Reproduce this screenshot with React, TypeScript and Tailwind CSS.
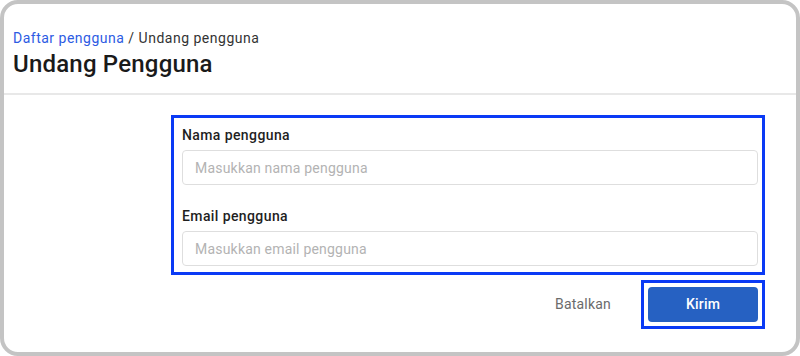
import React from "react";

export default function App() {
  return (
    <div
      className="w-[800px] h-[356px] bg-white"
      style={{ fontFamily: "Roboto, 'Noto Sans', sans-serif" }}
    >
      <div className="w-full h-full border-4 border-[#c4c4c4] rounded-[18px] flex flex-col bg-white overflow-hidden">
        <div className="pl-[9px] pt-[24px] h-[91px] border-b-2 border-[#e8e8e8]">
          <div className="text-[14px] leading-[20px] tracking-[0.5px] text-[#333333]">
            <span className="text-[#2d5be3]">Daftar pengguna</span> / Undang pengguna
          </div>
          <h1 className="mt-[2px] text-[24px] leading-[28px] tracking-[0.2px] font-medium text-[#1a1a1a]">
            Undang Pengguna
          </h1>
        </div>
        <div className="pl-[167px] pr-[31px] pt-[20px]">
          <div className="border-[3px] border-[#0a3af5] pl-[8px] pr-[4px] pt-[7px] pb-[6px]">
            <label className="block text-[14px] leading-[20px] tracking-[0.4px] font-medium text-[#1f1f1f]">
              Nama pengguna
            </label>
            <input
              className="mt-[5px] block w-full h-[35px] border border-[#dedede] rounded-[4px] px-[12px] text-[14px] tracking-[0.2px] placeholder:text-[#b3b3b3] outline-none"
              placeholder="Masukkan nama pengguna"
            />
            <label className="block mt-[21px] text-[14px] leading-[20px] tracking-[0.4px] font-medium text-[#1f1f1f]">
              Email pengguna
            </label>
            <input
              className="mt-[5px] block w-full h-[35px] border border-[#dedede] rounded-[4px] px-[12px] text-[14px] tracking-[0.2px] placeholder:text-[#b3b3b3] outline-none"
              placeholder="Masukkan email pengguna"
            />
          </div>
          <div className="mt-[5px] flex justify-end items-center gap-[30px]">
            <button className="text-[14px] tracking-[0.2px] text-[#6b6b6b]">Batalkan</button>
            <div className="border-[3px] border-[#0a3af5] p-[4px]">
              <button className="w-[110px] h-[35px] rounded-[4px] bg-[#2661c2] text-white text-[14px] tracking-[0.2px] font-medium">
                Kirim
              </button>
            </div>
          </div>
        </div>
      </div>
    </div>
  );
}
